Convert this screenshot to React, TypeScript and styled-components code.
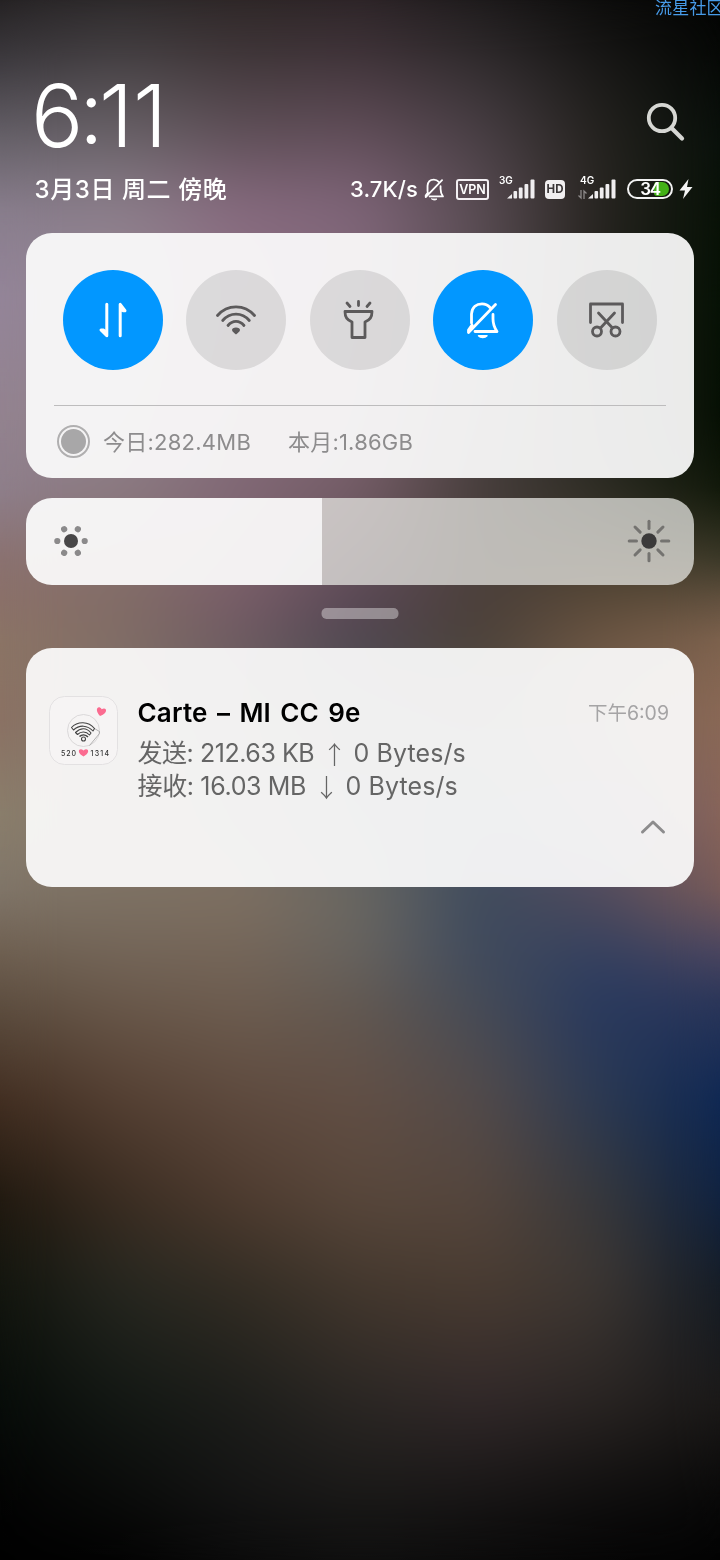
import React from "react";
import styled, { createGlobalStyle } from "styled-components";

const GlobalStyle = createGlobalStyle`
  * { box-sizing: border-box; }
  body { margin: 0; background: #000; }
`;

const Screen = styled.div`
  position: relative;
  width: 720px;
  height: 1560px;
  overflow: hidden;
  isolation: isolate;
  font-family: Inter, "Noto Sans CJK SC", sans-serif;
  color: #fff;
`;

/* Blurred wallpaper: horizontal colour bands, each one fading in over the band above it. */
const Wallpaper = styled.div`
  position: absolute;
  inset: 0;
  z-index: -1;
`;

const Band = styled.div<{ $from: number; $to: number; $colors: string }>`
  position: absolute;
  inset: 0;
  background: linear-gradient(to right, ${(p) => p.$colors});
  mask-image: linear-gradient(
    to bottom,
    transparent ${(p) => p.$from}px,
    #000 ${(p) => p.$to}px
  );
`;

const Haze = styled.div`
  position: absolute;
  inset: 0;
  backdrop-filter: blur(26px);
`;

const bands: [number, string][] = [
  [0, "#232021,#292627,#2b2424,#2a2225,#1b1819,#0b0b0a,#030303"],
  [60, "#3c393e,#494447,#42383b,#43363c,#322d2f,#191817,#050805"],
  [140, "#67626a,#6b646a,#62525b,#64505c,#4b4147,#25231f,#08100a"],
  [210, "#897e8d,#8e808d,#886b80,#80667a,#5a4d54,#272420,#061005"],
  [300, "#94859a,#93848f,#8b6f80,#7e6676,#574b50,#23221d,#051104"],
  [420, "#93838f,#908088,#856a77,#7b6270,#4c4343,#272721,#040e02"],
  [490, "#8e7f8c,#8b7a82,#806876,#745c65,#463d3b,#2c2b23,#0f1708"],
  [560, "#8b716f,#84706c,#7d626b,#62505a,#4a403b,#483f30,#3b3928"],
  [600, "#8b7069,#826c66,#785c68,#5a4655,#4b3f3b,#5a4938,#645240"],
  [640, "#8c7565,#806d66,#6c5a61,#4c4750,#4b4137,#6d5744,#80644f"],
  [720, "#8b7163,#83756a,#6f665e,#5a5658,#55504f,#7a614f,#8b6957"],
  [815, "#8b7f6c,#83786a,#746a60,#5b6065,#465162,#64586a,#8a6559"],
  [890, "#80766a,#7e7264,#7f7163,#696761,#3e4b5d,#524b5c,#7b5c58"],
  [950, "#6f6051,#746659,#756659,#676460,#3f4a5d,#35415f,#4d4660"],
  [1000, "#5e4f41,#6a594b,#6e5e51,#625952,#454b57,#28395f,#2b3659"],
  [1100, "#412d20,#543f32,#5e4a3e,#624f45,#534b4a,#2b3952,#0d2754"],
  [1200, "#1f180f,#3a2c21,#4e3b2f,#58473b,#55463d,#37383b,#0e2140"],
  [1285, "#12150e,#262720,#332d24,#44382e,#4a3c32,#3d3733,#131b25"],
  [1400, "#070c09,#131814,#1d1e1b,#2b2724,#32292a,#2a2523,#1b1918"],
  [1500, "#030303,#0a0b0a,#141414,#1a1918,#171515,#0f0e0e,#080808"],
  [1560, "#000000,#020202,#0a0a0a,#0e0e0e,#0a0a0a,#050505,#020202"],
];

const Watermark = styled.div`
  position: absolute;
  top: -1px;
  left: 655px;
  font-size: 17px;
  line-height: 18px;
  letter-spacing: 0.2px;
  white-space: nowrap;
  color: #479be8;
`;

const Header = styled.header`
  height: 233px;
  padding: 76px 26px 0 35px;
`;

const ClockRow = styled.div`
  display: flex;
  justify-content: space-between;
  height: 97px;
`;

const Clock = styled.div`
  display: flex;
  font-size: 87px;
  line-height: 80px;
  font-weight: 350;
  margin-left: -4px;
`;

const Digit = styled.span<{ $w: number }>`
  width: ${(p) => p.$w}px;
`;

const Colon = styled(Digit)`
  margin-top: -4px;
`;

const SearchButton = styled.div`
  width: 40px;
  height: 40px;
  margin: 26px 8px 0 0;
`;

const StatusRow = styled.div`
  display: flex;
  justify-content: space-between;
  align-items: center;
  height: 32px;
`;

const DateText = styled.div`
  margin-left: -0.5px;
  font-size: 24px;
  font-weight: 500;
  line-height: 32px;
  padding-top: 2px;
  letter-spacing: 0.6px;
  white-space: nowrap;
`;

const StatusIcons = styled.div`
  display: flex;
  align-items: center;
  height: 32px;
`;

const Speed = styled.div`
  width: 73px;
  font-size: 22px;
  font-weight: 500;
  line-height: 32px;
  letter-spacing: 0.1px;
  white-space: nowrap;
`;

const Card = styled.section<{ $height: number; $mb: number }>`
  height: ${(p) => p.$height}px;
  margin: 0 26px ${(p) => p.$mb}px;
  border-radius: 26px;
  background: rgba(252, 252, 252, 0.93);
  overflow: hidden;
`;

const Toggles = styled.div`
  display: flex;
  gap: 23.4px;
  padding: 37px 37px 35px;
`;

const Toggle = styled.div<{ $on?: boolean }>`
  display: flex;
  flex: none;
  align-items: center;
  justify-content: center;
  width: 100px;
  height: 100px;
  padding: 0 1px 1px 0;
  border-radius: 50%;
  background: ${(p) => (p.$on ? "#0297ff" : "rgba(0, 0, 0, 0.1)")};
  color: ${(p) => (p.$on ? "#fff" : "#5c5a5b")};
`;

const Usage = styled.div`
  display: flex;
  align-items: center;
  height: 72px;
  margin: 0 28px;
  border-top: 1px solid #bdbcbd;
  padding-left: 3px;
  font-size: 22px;
  color: #8d8c8d;
  white-space: nowrap;
`;

const UsageDot = styled.div`
  width: 33px;
  height: 33px;
  margin-right: 13px;
  border: 2px solid #b0afb0;
  border-radius: 50%;
  padding: 2px;
  &::after {
    content: "";
    display: block;
    height: 25px;
    border-radius: 50%;
    background: #a8a7a8;
  }
`;

const UsageText = styled.span<{ $w: number; $ls: number }>`
  width: ${(p) => p.$w}px;
  padding-bottom: 4px;
  letter-spacing: ${(p) => p.$ls}px;
`;

const Brightness = styled.section`
  display: flex;
  height: 87px;
  margin: 0 26px 23px;
  border-radius: 26px;
  overflow: hidden;
`;

const Level = styled.div`
  display: flex;
  align-items: center;
  width: 296px;
  padding: 0 0 2px 27px;
  background: rgba(252, 252, 252, 0.935);
`;

const Track = styled.div`
  display: flex;
  flex: 1;
  align-items: center;
  justify-content: flex-end;
  padding: 0 23px 2px 0;
  background: rgba(229, 230, 225, 0.75);
`;

const Handle = styled.div`
  width: 77px;
  height: 11px;
  margin: 0 auto 29px;
  border-radius: 5px;
  background: rgba(255, 255, 255, 0.38);
  transform: translateX(-0.5px);
`;

const Notice = styled.div`
  display: flex;
  padding: 48px 25px 0 23px;
`;

const NoticeBody = styled.div`
  flex: 1;
  margin-left: 18.5px;
  white-space: nowrap;
`;

const NoticeTitle = styled.div`
  display: flex;
  justify-content: space-between;
  height: 41px;
  font-size: 26px;
  font-weight: 600;
  line-height: 34px;
  letter-spacing: 0.2px;
  word-spacing: 2.5px;
  color: #000;
`;

const NoticeTime = styled.span`
  font-size: 19.5px;
  font-weight: 400;
  letter-spacing: 0;
  color: #a5a4a5;
`;

const NoticeLine = styled.div`
  display: flex;
  font-size: 25px;
  line-height: 33px;
  color: #656565;
`;

const Amount = styled.span<{ $w: number; $ls: number }>`
  width: ${(p) => p.$w}px;
  letter-spacing: ${(p) => p.$ls}px;
`;

const Arrow = styled.span`
  width: 38px;
  font-family: "Noto Sans CJK SC", sans-serif;
  font-weight: 300;
  text-align: center;
`;

const Collapse = styled.div`
  display: flex;
  justify-content: flex-end;
  padding: 8px 28px 0 0;
  margin-top: 8px;
`;

const Icon = styled.svg`
  display: block;
  flex: none;
  overflow: visible;
`;

const BarsIcon = () => (
  <Icon width="28" height="20" viewBox="0 0 28 20" fill="#efedef">
    <path d="M0 19.500 L5 15 V19.500Z" />
    <rect x="6.500" y="12" width="3.600" height="7.500" rx="1" />
    <rect x="11.800" y="8.500" width="3.800" height="11" rx="1" />
    <rect x="17.500" y="5" width="3.800" height="14.500" rx="1" />
    <rect x="23.500" y="0.500" width="4" height="19" rx="1" />
  </Icon>
);

const SignalBox = styled.div<{ $w: number; $mr: number }>`
  display: flex;
  flex-direction: column;
  width: ${(p) => p.$w}px;
  height: 26px;
  margin-right: ${(p) => p.$mr}px;
  font-size: 10px;
  font-weight: 600;
  line-height: 10px;
`;

const SignalLabel = styled.span<{ $indent: number }>`
  margin: -1px 0 0 ${(p) => p.$indent}px;
`;

const SignalBars = styled.div`
  display: flex;
  justify-content: flex-end;
  align-items: flex-end;
  gap: 1px;
  margin-top: -6px;
`;

const VpnBadge = styled.div`
  width: 33px;
  height: 21px;
  margin: 0 10px 0 10px;
  border: 2px solid #f3f0f3;
  border-radius: 3px;
  font: 600 12.5px/17px Inter, sans-serif;
  text-align: center;
`;

const HdBadge = styled.div`
  width: 20px;
  height: 19px;
  margin-right: 13px;
  border-radius: 4px;
  background: #f1eff0;
  color: #3a3637;
  font: 700 11.5px/19px Inter, sans-serif;
  text-align: center;
`;

const Battery = styled.div`
  display: flex;
  justify-content: flex-end;
  width: 46px;
  height: 20px;
  margin-right: 6px;
  padding: 1px 2px;
  border: 2px solid #f2f2f2;
  border-radius: 10px;
`;

const BatteryFill = styled.div`
  width: 15px;
  height: 14px;
  border-radius: 3px 7px 7px 3px;
  background: #43b117;
`;

const BatteryText = styled.span`
  width: 0;
  direction: rtl;
  font: 600 17px/14px Inter, sans-serif;
  letter-spacing: -1.2px;
  white-space: nowrap;
  transform: translateX(-9px);
`;

const BellOff = ({ size, stroke }: { size: number; stroke: number }) => (
  <Icon
    width={size}
    height={size}
    viewBox="0 0 36 38"
    fill="none"
    stroke="currentColor"
    strokeWidth={stroke}
    strokeLinecap="round"
    strokeLinejoin="round"
  >
    <path d="M6.500 22 V13 C7 6 11.500 2.800 17 2.800 C20.500 2.800 23 4.200 25 6.500" />
    <path d="M28 13.500 V18 C28 23 29 26 32 30.500 H10" />
    <path d="M30.500 3.500 L3.500 31.500 L3.500 29 L7 24" />
    <path d="M13.500 34.700 H22 C20 37 15.500 37 13.500 34.700Z" fill="currentColor" strokeWidth="1.500" />
  </Icon>
);

const DataIcon = () => (
  <Icon width="30" height="36" viewBox="0.5 0 30 36" fill="none" stroke="currentColor" strokeWidth="3" strokeLinecap="round" strokeLinejoin="round">
    <path d="M9.300 2.300 V33.700 L3.500 28 H6 L9 31" />
    <path d="M22.700 33.700 V2.300 L27.500 8.700 H25.500 L23 6" />
  </Icon>
);

const WifiIcon = () => (
  <Icon width="40" height="32" viewBox="0 0.500 40 32" fill="none" stroke="currentColor" strokeWidth="2.800" strokeLinecap="round">
    <path d="M1.500 12 C11.500 0.500 28.500 0.500 38.500 12" />
    <path d="M6.700 17 C14 8.500 26 8.500 33.300 17" />
    <path d="M12 22 C16.500 16.500 23.500 16.500 28 22" />
    <path d="M20 24 C22.500 24 24 25 24 26.500 C24 28 21.500 29.500 20 31 C18.500 29.500 16 28 16 26.500 C16 25 17.500 24 20 24Z" fill="currentColor" stroke="none" />
  </Icon>
);

const TorchIcon = () => (
  <Icon width="32" height="40" viewBox="0.500 0.500 32 40" fill="none" stroke="currentColor" strokeWidth="2.800" strokeLinecap="round" strokeLinejoin="round">
    <path d="M2.500 12 H29.500 C29.500 18 27.500 20 22.500 22.500 V38 H9.500 V22.500 C4.500 20 2.500 18 2.500 12Z" />
    <path d="M4.500 3.500 L7.500 7 M16 2 V6 M27.500 3.500 L24.500 7" />
  </Icon>
);

const ScreenshotIcon = () => (
  <Icon width="36" height="36" viewBox="-0.500 0 36 36" fill="none" stroke="currentColor" strokeWidth="2.800" strokeLinecap="round" strokeLinejoin="round">
    <path d="M2 20.500 V2 H34 V20.500" />
    <path d="M10 11 L24 26 M26 11 L12 26" />
    <circle cx="8.500" cy="29.500" r="4.500" />
    <circle cx="27" cy="29.500" r="4.500" />
  </Icon>
);

const DimIcon = () => (
  <Icon width="36" height="36" viewBox="-18 -18 36 36" fill="#8b8a8b">
    <circle r="7" fill="#484748" />
    {[0, 60, 120, 180, 240, 300].map((a) => (
      <circle key={a} cx="13.700" r="3.100" transform={`rotate(${a})`} />
    ))}
  </Icon>
);

const SunIcon = () => (
  <Icon width="44" height="44" viewBox="-22 -22 44 44" stroke="#747370" strokeWidth="3" strokeLinecap="round">
    {[0, 45, 90, 135, 180, 225, 270, 315].map((a) => (
      <path key={a} d="M12.500 0 H19.800" transform={`rotate(${a})`} />
    ))}
    <circle r="7.700" fill="#3b3a3a" stroke="none" />
  </Icon>
);

const heart = "M0 3.500 C-7 -1 -3.500 -6 0 -2.500 C3.500 -6 7 -1 0 3.500Z";

const AppIcon = () => (
  <Icon width="70" height="70" viewBox="0.500 0.500 70 70" fill="none">
    <rect x="1" y="1" width="68" height="68" rx="15" fill="#f6f4f4" stroke="#e3e1e2" />
    <circle cx="35" cy="35" r="16" stroke="#d3d1d2" strokeWidth="0.800" />
    <path d="M41 50 L51 38 V36 L46 33" stroke="#a19fa0" strokeWidth="0.800" />
    <g stroke="#444" strokeWidth="1.100" strokeLinejoin="round">
      <path d="M23 32 C29 25.500 40 25.500 46 33 L44.500 35.500 C39 29.500 31 29 25 34.500 Z" />
      <path d="M27 37 C32 32 38 32 42.500 37.500 L41 39.500 C37.500 35.500 32.500 35.500 29 39 Z" />
      <path d="M31 41 C33.500 38.800 37 39 39.500 41.500" strokeWidth="1.600" />
      <circle cx="35" cy="43.500" r="2" />
    </g>
    <path d={heart} fill="#fb6b90" transform="translate(52.500 16.500) rotate(14) scale(1.150)" />
    <path d={heart} fill="#fb6b90" transform="translate(35 57.500) scale(1.150 1)" />
    <g fill="#333" fontFamily="Inter, sans-serif" fontSize="7" fontWeight="500">
      <text x="12.500" y="60" textLength="15">520</text>
      <text x="42" y="60" textLength="18.500">1314</text>
    </g>
  </Icon>
);

export default function App() {
  return (
    <Screen>
      <GlobalStyle />
      <Wallpaper>
        {bands.map(([y, colors], i) => (
          <Band key={y} $from={i ? bands[i - 1][0] : -1} $to={y} $colors={colors} />
        ))}
        <Haze />
      </Wallpaper>
      <Watermark>流星社区</Watermark>

      <Header>
        <ClockRow>
          <Clock>
            <Digit $w={48}>6</Digit>
            <Colon $w={20}>:</Colon>
            <Digit $w={34}>1</Digit>
            <Digit $w={34}>1</Digit>
          </Clock>
          <SearchButton>
            <Icon width="40" height="40" viewBox="0 0 40 40" fill="none" stroke="#d6d7d3" strokeLinecap="round">
              <circle cx="16" cy="16" r="13.200" strokeWidth="3.800" />
              <path d="M26 26.500 L36 36.500" strokeWidth="4.200" />
            </Icon>
          </SearchButton>
        </ClockRow>
        <StatusRow>
          <DateText>3月3日 周二 傍晚</DateText>
          <StatusIcons>
            <Speed>3.7K/s</Speed>
            <BellOff size={23} stroke={3} />
            <VpnBadge>VPN</VpnBadge>
            <SignalBox $w={36} $mr={10}>
              <SignalLabel $indent={0}>3G</SignalLabel>
              <SignalBars><BarsIcon /></SignalBars>
            </SignalBox>
            <HdBadge>HD</HdBadge>
            <SignalBox $w={38} $mr={11}>
              <SignalLabel $indent={2}>4G</SignalLabel>
              <SignalBars>
                <Icon width="9" height="9" viewBox="0 0 9 9" fill="none" stroke="#8d8a8a" strokeWidth="1.300">
                  <path d="M3 0 V8 L0.500 5.500 M6 9 V1 L8.500 3.500" />
                </Icon>
                <BarsIcon />
              </SignalBars>
            </SignalBox>
            <Battery>
              <BatteryFill />
              <BatteryText>34</BatteryText>
            </Battery>
            <Icon width="15" height="20" viewBox="0 0 15 20" fill="#f4f4f4">
              <path d="M9.500 0 L0.500 11.500 H6 L4 20 L13.500 8 H8 Z" />
            </Icon>
          </StatusIcons>
        </StatusRow>
      </Header>

      <Card $height={245} $mb={20}>
        <Toggles>
          <Toggle $on><DataIcon /></Toggle>
          <Toggle><WifiIcon /></Toggle>
          <Toggle><TorchIcon /></Toggle>
          <Toggle $on><BellOff size={38} stroke={2.8} /></Toggle>
          <Toggle><ScreenshotIcon /></Toggle>
        </Toggles>
        <Usage>
          <UsageDot />
          <UsageText $w={185} $ls={0.25}>今日:282.4MB</UsageText>
          <UsageText $w={130} $ls={0.2}>本月:1.86GB</UsageText>
        </Usage>
      </Card>

      <Brightness>
        <Level><DimIcon /></Level>
        <Track><SunIcon /></Track>
      </Brightness>

      <Handle />

      <Card $height={239} $mb={0}>
        <Notice>
          <AppIcon />
          <NoticeBody>
            <NoticeTitle>
              Carte – MI CC 9e
              <NoticeTime>下午6:09</NoticeTime>
            </NoticeTitle>
            <NoticeLine>
              <Amount $w={178} $ls={-0.45}>发送: 212.63 KB</Amount>
              <Arrow>↑</Arrow>
              <Amount $w={114} $ls={0.1}>0 Bytes/s</Amount>
            </NoticeLine>
            <NoticeLine>
              <Amount $w={170} $ls={-0.35}>接收: 16.03 MB</Amount>
              <Arrow>↓</Arrow>
              <Amount $w={114} $ls={0.1}>0 Bytes/s</Amount>
            </NoticeLine>
          </NoticeBody>
        </Notice>
        <Collapse>
          <Icon width="26" height="16" viewBox="0 0 26 16" fill="none" stroke="#8d8c8d" strokeWidth="3" strokeLinecap="round" strokeLinejoin="round">
            <path d="M2.500 13 L13 3 L23.500 13" />
          </Icon>
        </Collapse>
      </Card>
    </Screen>
  );
}
